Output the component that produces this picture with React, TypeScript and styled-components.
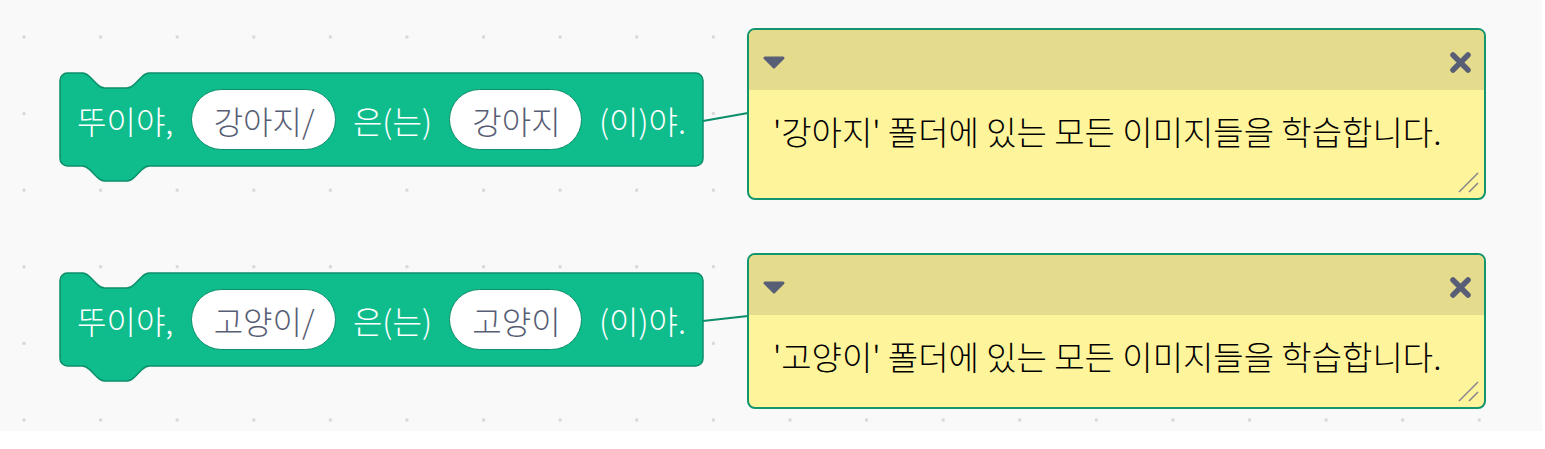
import React from "react";
import styled, { createGlobalStyle } from "styled-components";

const GlobalStyle = createGlobalStyle`
  html, body { margin: 0; padding: 0; background: #ffffff; }
  * { box-sizing: border-box; }
`;

const FONT = `"Noto Sans CJK KR", "Noto Sans", sans-serif`;

const Workspace = styled.div`
  position: relative;
  width: 1542px;
  height: 431px;
  background-color: #f9f9f9;
  background-image: radial-gradient(circle at center, #d6d6d6 1.3px, transparent 2px);
  background-size: 76.6px 76.6px;
  background-position: -14.3px -1.3px;
  overflow: hidden;
`;

const Wires = styled.svg`
  position: absolute;
  left: 0;
  top: 0;
  width: 1542px;
  height: 431px;
  pointer-events: none;
`;

const BlockWrap = styled.div<{ $x: number; $y: number }>`
  position: absolute;
  left: ${(p) => p.$x}px;
  top: ${(p) => p.$y}px;
  width: 643px;
  height: 93px;
`;

const BlockShape = styled.svg`
  position: absolute;
  left: 0;
  top: 0;
  overflow: visible;
`;

const BlockRow = styled.div`
  position: relative;
  height: 93px;
  display: flex;
  align-items: center;
  justify-content: space-between;
  padding: 0 17px 0 17px;
  font-family: ${FONT};
  font-size: 32px;
  font-weight: 300;
  color: #ffffff;
  white-space: nowrap;
`;

const Label = styled.span`
  line-height: 1;
`;

const Pill = styled.span`
  display: flex;
  align-items: center;
  height: 61px;
  padding: 0 20px 0 22px;
  border-radius: 31px;
  background: #ffffff;
  border: 1.5px solid #0b8e69;
  color: #575e75;
  line-height: 1;
`;

const CommentBox = styled.div<{ $x: number; $y: number; $h: number }>`
  position: absolute;
  left: ${(p) => p.$x}px;
  top: ${(p) => p.$y}px;
  width: 739px;
  height: ${(p) => p.$h}px;
  display: flex;
  flex-direction: column;
  border: 2px solid #13956e;
  border-radius: 8px;
  overflow: hidden;
  background: #fef49c;
`;

const CommentHeader = styled.div`
  height: 60px;
  flex: none;
  display: flex;
  align-items: center;
  justify-content: space-between;
  padding: 4px 12px 0 14px;
  background: #e4db8c;
`;

const CommentBody = styled.div`
  position: relative;
  flex: 1;
  padding: 18px 0 0 24px;
  font-family: ${FONT};
  font-size: 33px;
  font-weight: 300;
  line-height: 1.4;
  color: #000000;
  white-space: nowrap;
`;

const Resize = styled.svg`
  position: absolute;
  right: 4px;
  bottom: 4px;
`;

const BLOCK_PATH =
  "M0,7.44 A7.44,7.44 0 0 1 7.44,0 H22.32 " +
  "c3.72,0 5.58,1.86 7.44,3.72 l7.44,7.44 c1.86,1.86 3.72,3.72 7.44,3.72 h22.32 " +
  "c3.72,0 5.58,-1.86 7.44,-3.72 l7.44,-7.44 c1.86,-1.86 3.72,-3.72 7.44,-3.72 " +
  "H635.56 A7.44,7.44 0 0 1 643,7.44 V85.56 A7.44,7.44 0 0 1 635.56,93 H89.28 " +
  "c-3.72,0 -5.58,1.86 -7.44,3.72 l-7.44,7.44 c-1.86,1.86 -3.72,3.72 -7.44,3.72 h-22.32 " +
  "c-3.72,0 -5.58,-1.86 -7.44,-3.72 l-7.44,-7.44 c-1.86,-1.86 -3.72,-3.72 -7.44,-3.72 " +
  "H7.44 A7.44,7.44 0 0 1 0,85.56 Z";

function Block({ x, y, a, b }: { x: number; y: number; a: string; b: string }) {
  return (
    <BlockWrap $x={x} $y={y}>
      <BlockShape width={643} height={110} viewBox="0 0 643 110">
        <path d={BLOCK_PATH} fill="#0fbd8c" stroke="#0b8e69" strokeWidth={1.5} />
      </BlockShape>
      <BlockRow>
        <Label>뚜이야,</Label>
        <Pill>{a}</Pill>
        <Label>은(는)</Label>
        <Pill>{b}</Pill>
        <Label>(이)야.</Label>
      </BlockRow>
    </BlockWrap>
  );
}

function Comment({ x, y, h, text }: { x: number; y: number; h: number; text: string }) {
  return (
    <CommentBox $x={x} $y={y} $h={h}>
      <CommentHeader>
        <svg width="22" height="13" viewBox="0 0 22 13">
          <path d="M2,2 L20,2 L11,11 Z" fill="#575e75" stroke="#575e75" strokeWidth={3} strokeLinejoin="round" />
        </svg>
        <svg width="23" height="23" viewBox="0 0 23 23">
          <path d="M4,4 L19,19 M19,4 L4,19" stroke="#575e75" strokeWidth={5.5} strokeLinecap="round" />
        </svg>
      </CommentHeader>
      <CommentBody>
        {text}
        <Resize width="22" height="22" viewBox="0 0 22 22">
          <path d="M1,20 L20,1 M11,20 L20,11" stroke="#8a8a8a" strokeWidth={1.6} />
        </Resize>
      </CommentBody>
    </CommentBox>
  );
}

export default function App() {
  return (
    <>
      <GlobalStyle />
      <Workspace>
        <Wires viewBox="0 0 1542 431">
          <line x1={703} y1={121} x2={748} y2={113} stroke="#0b8e69" strokeWidth={2} />
          <line x1={703} y1={321} x2={748} y2={316} stroke="#0b8e69" strokeWidth={2} />
        </Wires>
        <Block x={60} y={73} a="강아지/" b="강아지" />
        <Block x={60} y={273} a="고양이/" b="고양이" />
        <Comment x={747} y={28} h={172} text="'강아지' 폴더에 있는 모든 이미지들을 학습합니다." />
        <Comment x={747} y={253} h={156} text="'고양이' 폴더에 있는 모든 이미지들을 학습합니다." />
      </Workspace>
    </>
  );
}
